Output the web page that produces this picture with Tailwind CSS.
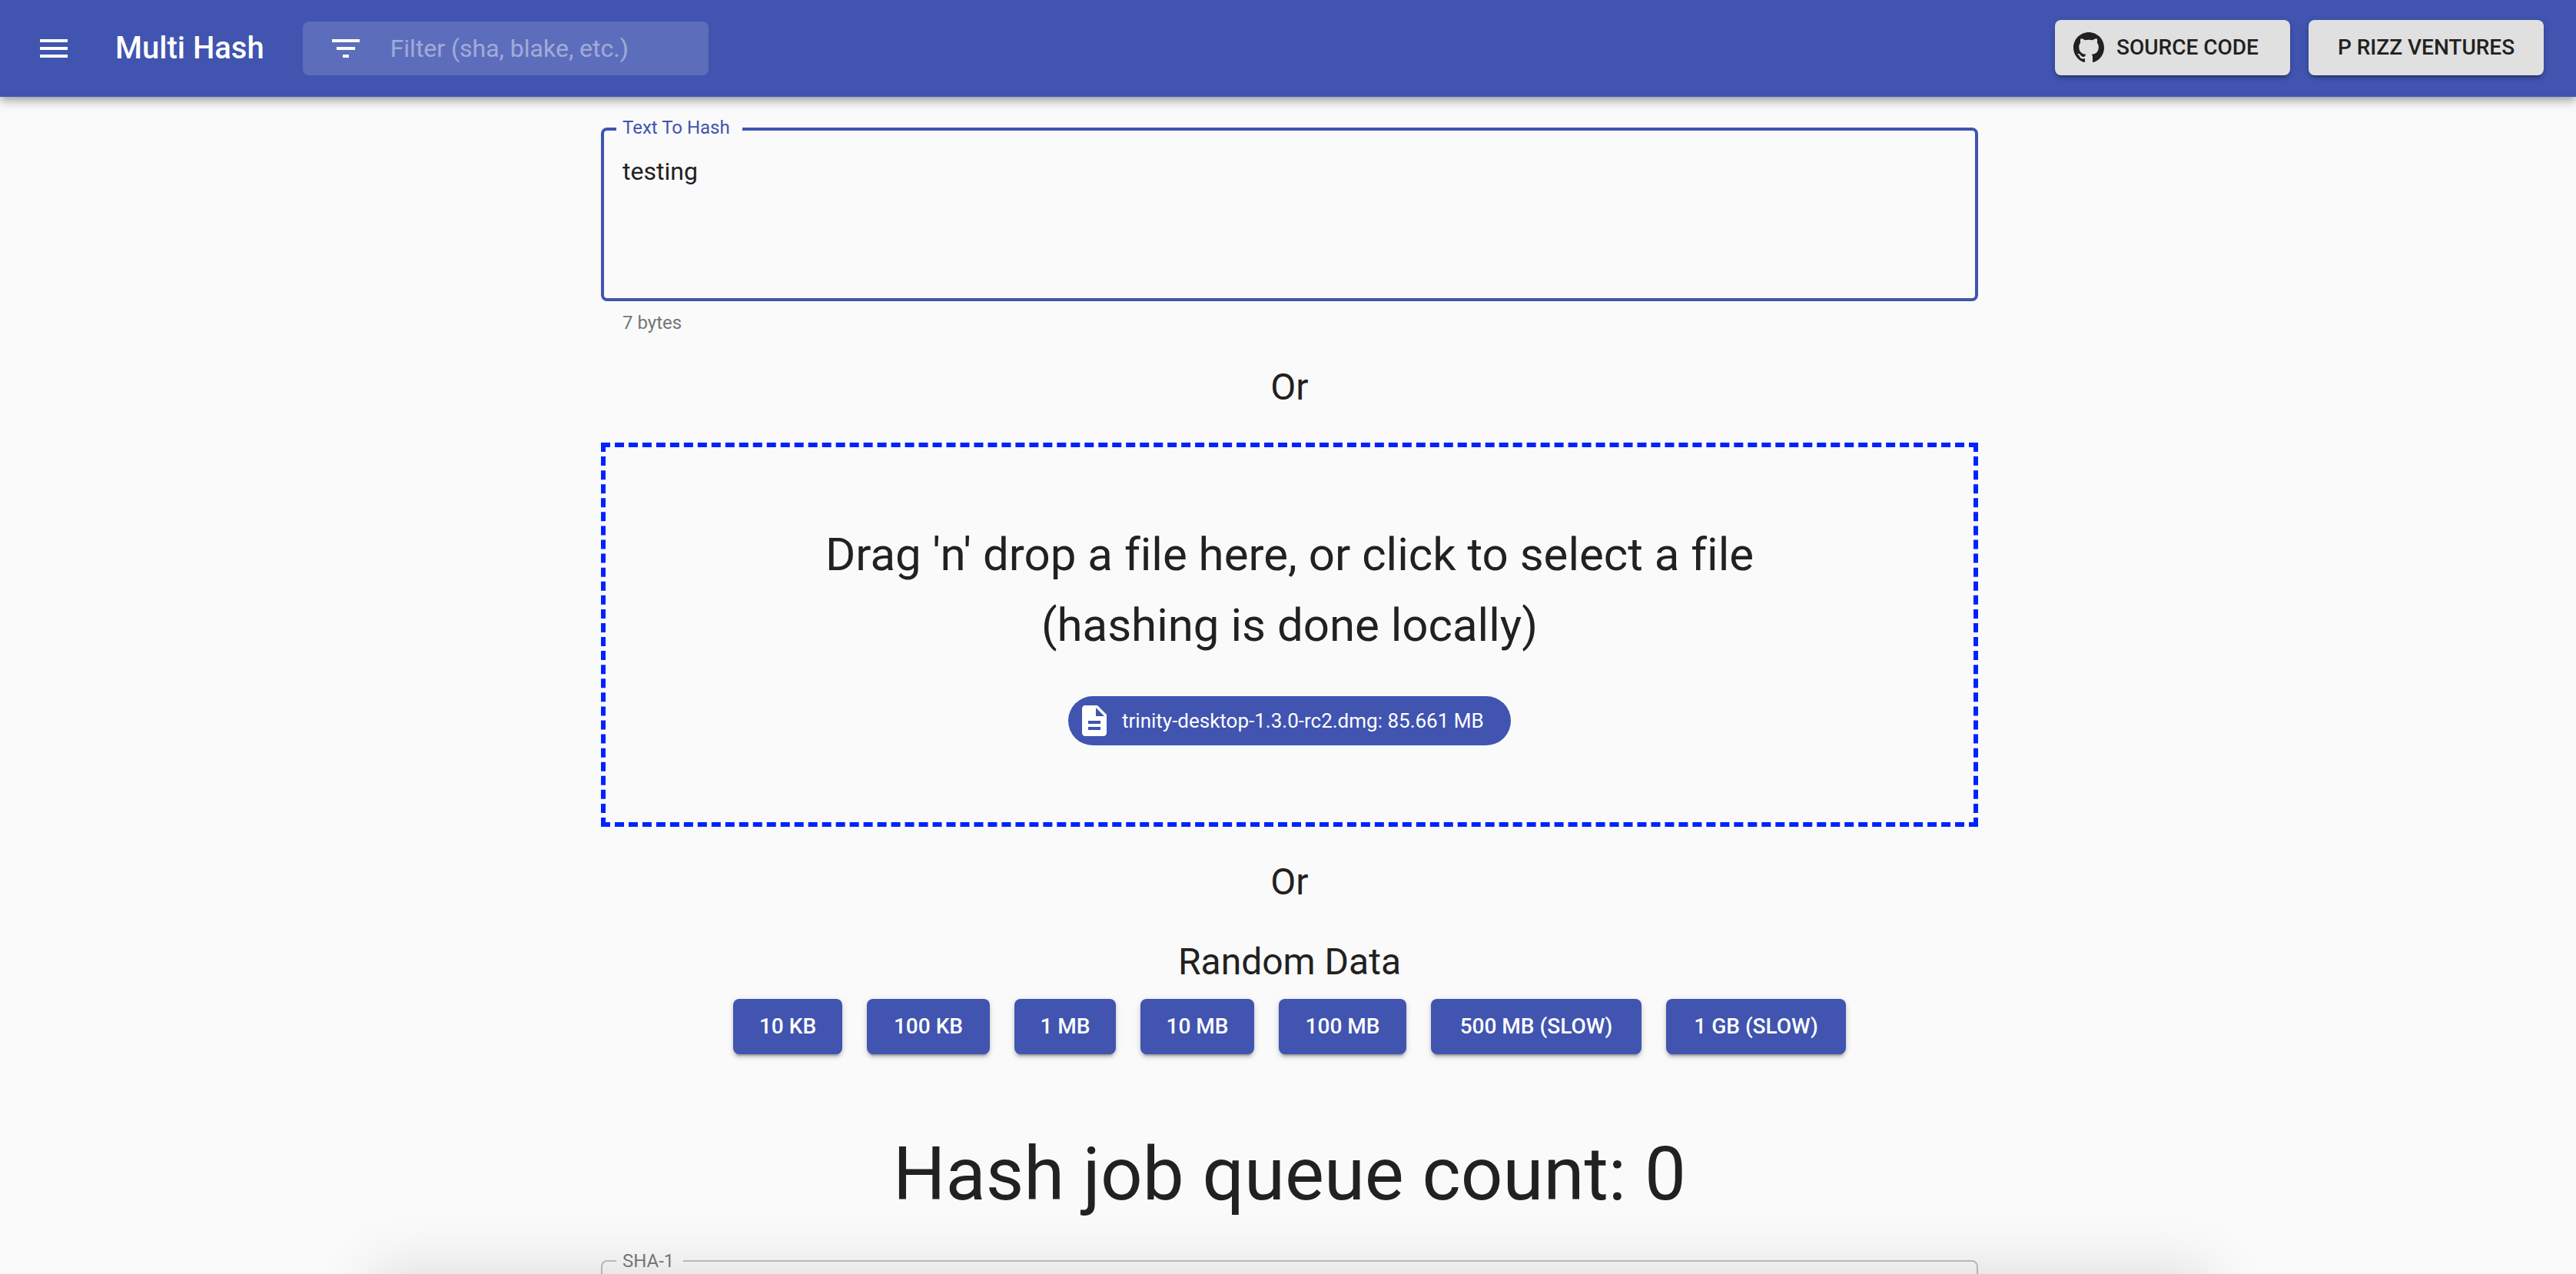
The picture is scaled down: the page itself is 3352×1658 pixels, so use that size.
<!DOCTYPE html>
<html lang="en">
<head>
<meta charset="utf-8">
<title>Multi Hash</title>
<script src="https://cdn.jsdelivr.net/npm/@tailwindcss/browser@4"></script>
</head>
<body class="relative h-screen overflow-hidden bg-[#fafafa] font-[Roboto,sans-serif] text-[#212121] [font-variant-ligatures:none]">
<header class="relative flex h-[126px] items-center bg-[#4054b0] pr-[42px] pl-[46px] text-white shadow-[0_4px_8px_-2px_rgb(0_0_0/0.2),0_8px_10px_0_rgb(0_0_0/0.14),0_2px_20px_0_rgb(0_0_0/0.12)]">
  <button type="button" aria-label="Open menu" class="mr-14">
    <svg class="size-12" viewBox="0 0 24 24" fill="currentColor"><path d="M3 18h18v-2H3v2zm0-5h18v-2H3v2zm0-7v2h18V6H3z"/></svg>
  </button>
  <h1 class="mr-[50px] text-[40px] leading-[64px] font-medium whitespace-nowrap">Multi Hash</h1>
  <label class="flex h-[70px] w-[528px] items-center gap-[34px] rounded-lg bg-white/15 pl-8">
    <svg class="size-12 shrink-0" viewBox="0 0 24 24" fill="currentColor"><path d="M10 18h4v-2h-4v2zM3 6v2h18V6H3zm3 7h12v-2H6v2z"/></svg>
    <input type="text" aria-label="Filter" placeholder="Filter (sha, blake, etc.)" class="min-w-0 flex-1 text-[32px] leading-[38px] outline-none placeholder:text-white/42">
  </label>
  <nav class="ml-auto flex gap-6 pb-0.5 text-[28px] leading-[48px] font-medium text-[#212121]">
    <a href="#source" class="flex h-[72px] w-[306px] items-center gap-4 rounded-lg bg-[#e0e0e0] pl-6 whitespace-nowrap shadow-[0_6px_2px_-4px_rgb(0_0_0/0.2),0_4px_4px_0_rgb(0_0_0/0.14),0_2px_10px_0_rgb(0_0_0/0.12)]">
      <svg class="size-10" viewBox="0 0 16 16" fill="currentColor"><path d="M8 0C3.58 0 0 3.58 0 8c0 3.54 2.29 6.53 5.47 7.59.4.07.55-.17.55-.38 0-.19-.01-.82-.01-1.49-2.01.37-2.53-.49-2.69-.94-.09-.23-.48-.94-.82-1.13-.28-.15-.68-.52-.01-.53.63-.01 1.08.58 1.23.82.72 1.21 1.87.87 2.33.66.07-.52.28-.87.51-1.07-1.78-.2-3.64-.89-3.64-3.95 0-.87.31-1.59.82-2.15-.08-.2-.36-1.02.08-2.12 0 0 .67-.21 2.2.82.64-.18 1.32-.27 2-.27s1.36.09 2 .27c1.53-1.04 2.2-.82 2.2-.82.44 1.1.16 1.92.08 2.12.51.56.82 1.27.82 2.15 0 3.07-1.87 3.75-3.65 3.95.29.25.54.73.54 1.48 0 1.07-.01 1.93-.01 2.2 0 .21.15.46.55.38A8.01 8.01 0 0 0 16 8c0-4.42-3.58-8-8-8z"/></svg>
      SOURCE CODE
    </a>
    <a href="#ventures" class="flex h-[72px] w-[306px] items-center justify-center rounded-lg bg-[#e0e0e0] whitespace-nowrap shadow-[0_6px_2px_-4px_rgb(0_0_0/0.2),0_4px_4px_0_rgb(0_0_0/0.14),0_2px_10px_0_rgb(0_0_0/0.12)]">P RIZZ VENTURES</a>
  </nav>
</header>

<main class="mx-auto flex w-full max-w-[1796px] flex-col pt-10 pl-1">
  <div class="relative flex">
    <label for="source-text" class="absolute -top-3 left-5 bg-[#fafafa] pr-4 pl-2 text-[24px] leading-6 text-[#4054b0]">Text To Hash</label>
    <textarea id="source-text" class="h-[226px] w-full resize-none rounded-lg border-4 border-[#4054b0] px-6 pt-[34px] text-[32px] leading-[38px] outline-none">testing</textarea>
  </div>
  <p class="mt-2 px-7 text-[24px] leading-10 text-[#757575]">7 bytes</p>
  <p class="mt-8 text-center text-[48px] leading-16">Or</p>
  <button type="button" class="mt-10 flex h-[500px] flex-col items-center justify-center border-6 border-dashed border-[#0022ff] pb-1.5">
    <span class="text-[60px] leading-[92px]">Drag 'n' drop a file here, or click to select a file<br>(hashing is done locally)</span>
    <span class="mt-[46px] flex h-16 w-[576px] items-center gap-3 rounded-full bg-[#4054b0] pl-[10px] text-[26px] whitespace-nowrap text-white">
      <svg class="size-12 shrink-0" viewBox="0 0 24 24" fill="currentColor"><path d="M14 2H6c-1.100 0-1.990.9-1.990 2L4 20c0 1.100.89 2 1.990 2H18c1.100 0 2-.9 2-2V8l-6-6zm2 16H8v-2h8v2zm0-4H8v-2h8v2zm-3-5V3.500L18.500 9H13z"/></svg>
      trinity-desktop-1.3.0-rc2.dmg: 85.661 MB
    </span>
  </button>
  <p class="mt-10 text-center text-[48px] leading-16">Or</p>
  <h2 class="mt-10 text-center text-[48px] leading-16">Random Data</h2>
  <div class="mt-4 flex justify-center gap-8 text-[28px] leading-[48px] font-medium whitespace-nowrap text-white [&>button]:h-[72px] [&>button]:rounded-lg [&>button]:bg-[#4054b0] [&>button]:shadow-[0_6px_2px_-4px_rgb(0_0_0/0.2),0_4px_4px_0_rgb(0_0_0/0.14),0_2px_10px_0_rgb(0_0_0/0.12)]">
    <button type="button" class="w-[142px]">10 KB</button>
    <button type="button" class="w-[160px]">100 KB</button>
    <button type="button" class="w-[132px]">1 MB</button>
    <button type="button" class="w-[148px]">10 MB</button>
    <button type="button" class="w-[166px]">100 MB</button>
    <button type="button" class="w-[274px]">500 MB (SLOW)</button>
    <button type="button" class="w-[234px]">1 GB (SLOW)</button>
  </div>
  <h2 class="mt-[100px] text-center text-[96px] leading-[112px]">Hash job queue count: 0</h2>
  <fieldset class="mt-[45px] h-[112px] rounded-lg border-2 border-black/23 px-[18px]">
    <legend class="pr-3 pl-2 text-[24px] leading-6 text-[#757575]"><label for="sha1">SHA-1</label></legend>
    <input id="sha1" type="text" readonly class="w-full text-[32px] outline-none">
  </fieldset>
</main>
<div class="absolute top-full right-[476px] left-[485px] -z-10 h-40 shadow-[0_0_80px_0_rgb(0_0_0/0.14)]"></div>
</body>
</html>
